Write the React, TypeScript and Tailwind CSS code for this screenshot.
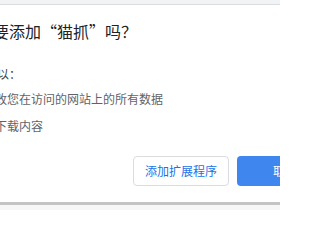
export default function App() {
  return (
    <div className="relative h-[210px] w-[280px] overflow-hidden bg-[#f7f7f7] font-['Noto_Sans_CJK_SC','Noto_Sans',sans-serif]">
      {/* 浏览器顶部 */}
      <div className="h-[5px] border-b border-[#dadce0] bg-[#f1f3f4]" />

      {/* 对话框 */}
      <div className="h-[200px] border-b-[3px] border-[#c4c4c4] bg-white">
        <div className="pt-[15px]">
          <h1 className="-ml-[7px] whitespace-nowrap text-[16px] leading-[22px] text-[#202124]">
            要添加“猫抓”吗<span className="[text-spacing-trim:space-all]">？</span>
          </h1>
          <p className="mt-[22px] -ml-[3px] whitespace-nowrap text-[12px] leading-[20px] text-[#3c4043] [text-spacing-trim:space-all]">
            以：
          </p>
          <ul className="mt-[5px] flex flex-col gap-[7px] text-[12px] leading-[20px] text-[#5f6368]">
            <li className="-ml-[5px] whitespace-nowrap">改您在访问的网站上的所有数据</li>
            <li className="-ml-[5px] whitespace-nowrap">下载内容</li>
          </ul>
        </div>

        <div className="mt-[20px] flex gap-[8px] pl-[133px]">
          <button className="h-[30px] w-[96px] shrink-0 rounded-[4px] border border-[#dadce0] bg-white text-[12px] text-[#1a73e8]">
            添加扩展程序
          </button>
          <button className="h-[30px] w-[96px] shrink-0 rounded-[4px] bg-[#3f86ee] text-[12px] text-white">
            取消
          </button>
        </div>
      </div>
    </div>
  );
}
